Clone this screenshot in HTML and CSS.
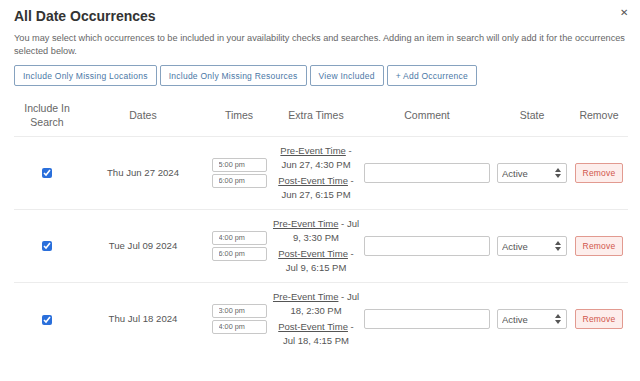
FILE: index.html
```html
<!DOCTYPE html>
<html>
<head>
<meta charset="utf-8">
<link rel="stylesheet" href="styles.css">
</head>
<body>
<div class="modal">
  <div class="head">
    <h1 class="title">All Date Occurrences</h1>
    <span class="close">&#x2715;</span>
  </div>
  <p class="desc">You may select which occurrences to be included in your availability checks and searches. Adding an item in search will only add it for the occurrences selected below.</p>
  <div class="actions">
    <button class="btn">Include Only Missing Locations</button>
    <button class="btn">Include Only Missing Resources</button>
    <button class="btn">View Included</button>
    <button class="btn">+ Add Occurrence</button>
  </div>
  <table class="grid">
    <colgroup>
      <col class="c1"><col class="c2"><col class="c3"><col class="c4"><col class="c5"><col class="c6"><col class="c7">
    </colgroup>
    <thead>
      <tr><th>Include In<br>Search</th><th>Dates</th><th>Times</th><th>Extra Times</th><th>Comment</th><th>State</th><th>Remove</th></tr>
    </thead>
    <tbody>
      <tr>
        <td><input type="checkbox" class="chk" checked></td>
        <td class="date">Thu Jun 27 2024</td>
        <td><div class="times"><input class="time" value="5:00 pm"><input class="time" value="6:00 pm"></div></td>
        <td class="extra"><p><u>Pre-Event Time</u> -<br>Jun 27, 4:30 PM</p><p><u>Post-Event Time</u> -<br>Jun 27, 6:15 PM</p></td>
        <td><input class="comment"></td>
        <td><div class="sel"><select><option>Active</option></select><svg class="arrows" width="6" height="10" viewBox="0 0 6 10"><path d="M0 4 L3 0 L6 4Z M0 6 L3 10 L6 6Z" fill="#555"/></svg></div></td>
        <td><button class="remove">Remove</button></td>
      </tr>
      <tr>
        <td><input type="checkbox" class="chk" checked></td>
        <td class="date">Tue Jul 09 2024</td>
        <td><div class="times"><input class="time" value="4:00 pm"><input class="time" value="6:00 pm"></div></td>
        <td class="extra"><p><u>Pre-Event Time</u> - Jul<br>9, 3:30 PM</p><p><u>Post-Event Time</u> -<br>Jul 9, 6:15 PM</p></td>
        <td><input class="comment"></td>
        <td><div class="sel"><select><option>Active</option></select><svg class="arrows" width="6" height="10" viewBox="0 0 6 10"><path d="M0 4 L3 0 L6 4Z M0 6 L3 10 L6 6Z" fill="#555"/></svg></div></td>
        <td><button class="remove">Remove</button></td>
      </tr>
      <tr>
        <td><input type="checkbox" class="chk" checked></td>
        <td class="date">Thu Jul 18 2024</td>
        <td><div class="times"><input class="time" value="3:00 pm"><input class="time" value="4:00 pm"></div></td>
        <td class="extra"><p><u>Pre-Event Time</u> - Jul<br>18, 2:30 PM</p><p><u>Post-Event Time</u> -<br>Jul 18, 4:15 PM</p></td>
        <td><input class="comment"></td>
        <td><div class="sel"><select><option>Active</option></select><svg class="arrows" width="6" height="10" viewBox="0 0 6 10"><path d="M0 4 L3 0 L6 4Z M0 6 L3 10 L6 6Z" fill="#555"/></svg></div></td>
        <td><button class="remove">Remove</button></td>
      </tr>
    </tbody>
  </table>
</div>
</body>
</html>
```
FILE: styles.css
```css
* { box-sizing: border-box; }
html, body { margin: 0; background: #fff; }
body { font-family: "Liberation Sans", Arial, sans-serif; color: #444; }
.modal { padding: 7px 12px 0 14px; }
.head { display: flex; justify-content: space-between; align-items: flex-start; }
.title { margin: 0; font-size: 14px; font-weight: bold; color: #333; line-height: 18px; }
.close { font-size: 10px; color: #555; margin-top: 0; margin-right: 0; }
.desc { margin: 7px 0 0; font-size: 9.2px; line-height: 13px; color: #666; }
.actions { display: flex; gap: 3px; margin-top: 7px; }
.btn { font-family: inherit; font-size: 8.5px; letter-spacing: 0.25px; color: #4b78a6; background: #fff; border: 1px solid #86a2bf; border-radius: 2px; height: 21px; padding: 0 8px; }
.grid { width: 614px; border-collapse: collapse; table-layout: fixed; margin-top: 8px; }
.c1 { width: 66px; } .c2 { width: 126px; } .c3 { width: 66px; } .c4 { width: 88px; }
.c5 { width: 134px; } .c6 { width: 76px; } .c7 { width: 58px; }
th { font-weight: normal; font-size: 10.5px; line-height: 14px; color: #666; height: 42px; padding: 0; vertical-align: middle; }
td { text-align: center; vertical-align: middle; border-top: 1px solid #ececec; height: 73px; padding: 0 2px; }
.chk { width: 10px; height: 10px; margin: 0; accent-color: #2a6fdb; vertical-align: middle; }
.date { font-size: 9.6px; color: #555; }
.times { display: flex; flex-direction: column; gap: 2px; align-items: center; }
.time { width: 55px; height: 14px; font-family: inherit; font-size: 7.3px; color: #666; border: 1px solid #c8c8c8; border-radius: 2px; padding: 0 0 0 6px; }
.extra { font-size: 9.5px; line-height: 14px; color: #555; padding: 0; white-space: nowrap; }
.extra p { margin: 0; }
.extra p + p { margin-top: 2px; }
.extra u { color: #555; }
.comment { width: 126px; height: 20px; border: 1px solid #c8c8c8; border-radius: 2px; display: block; margin: 0 auto; }
.sel { position: relative; width: 70px; margin: 0 auto; }
.sel select { appearance: none; -webkit-appearance: none; width: 70px; height: 20px; font-family: inherit; font-size: 9.5px; color: #555; background: #fff; border: 1px solid #c8c8c8; border-radius: 2px; padding: 2px 0 0 4px; }
.arrows { position: absolute; right: 6px; top: 5px; pointer-events: none; }
.remove { font-family: inherit; font-size: 8.5px; letter-spacing: 0.2px; color: #d0564b; background: #fdeeec; border: 1px solid #e29a90; border-radius: 2px; width: 48px; height: 20px; padding: 0; }
```
